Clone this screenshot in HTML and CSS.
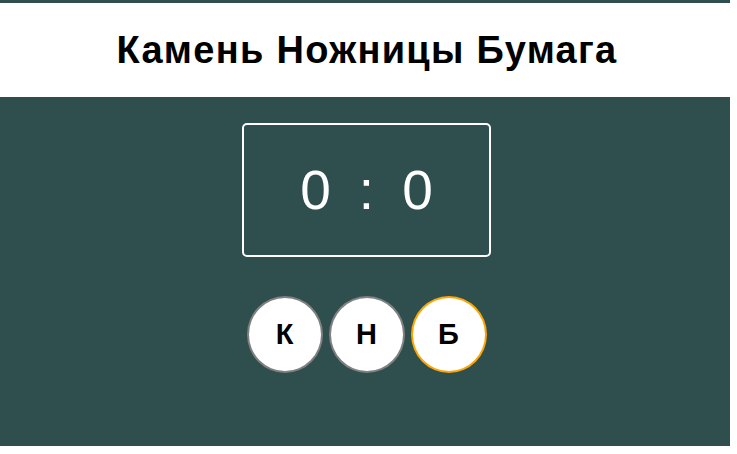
FILE: index.html
```html
<!DOCTYPE html>
<html lang="ru">
<head>
<meta charset="utf-8">
<title>Камень Ножницы Бумага</title>
<link rel="stylesheet" href="styles.css">
</head>
<body>
<div class="app">
  <header class="header">
    <h1 class="title">Камень Ножницы Бумага</h1>
  </header>
  <main class="board">
    <div class="score">
      <span class="num">0</span><span class="sep">:</span><span class="num">0</span>
    </div>
    <div class="choices">
      <button class="choice">К</button>
      <button class="choice">Н</button>
      <button class="choice selected">Б</button>
    </div>
  </main>
</div>
</body>
</html>
```

FILE: styles.css
```css
html, body {
  margin: 0;
  padding: 0;
  background: #ffffff;
}
.app {
  width: 730px;
  height: 446px;
  background: #2f4f4f;
  padding-top: 3px;
  box-sizing: border-box;
  font-family: "Liberation Sans", Arial, sans-serif;
}
.header {
  background: #ffffff;
  height: 94px;
  display: flex;
  align-items: center;
  justify-content: center;
  padding-left: 4px;
}
.title {
  margin: 0;
  font-size: 38px;
  font-weight: bold;
  letter-spacing: 1.3px;
  color: #000000;
}
.board {
  display: flex;
  flex-direction: column;
  align-items: center;
  padding: 26px 0 0 3px;
}
.score {
  width: 249px;
  height: 134px;
  box-sizing: border-box;
  border: 2px solid #ffffff;
  border-radius: 5px;
  display: flex;
  align-items: center;
  justify-content: center;
  color: #ffffff;
  font-size: 55px;
  gap: 28px;
}
.num, .sep {
  line-height: 1;
}
.choices {
  display: flex;
  gap: 6px;
  margin-top: 39px;
}
.choice {
  width: 76px;
  height: 77px;
  border-radius: 50%;
  border: 2px solid #808080;
  background: #ffffff;
  color: #000000;
  font-family: "Liberation Sans", Arial, sans-serif;
  font-size: 29px;
  font-weight: bold;
  padding: 0;
  display: flex;
  align-items: center;
  justify-content: center;
}
.choice.selected {
  border-color: #ffa500;
}
```
